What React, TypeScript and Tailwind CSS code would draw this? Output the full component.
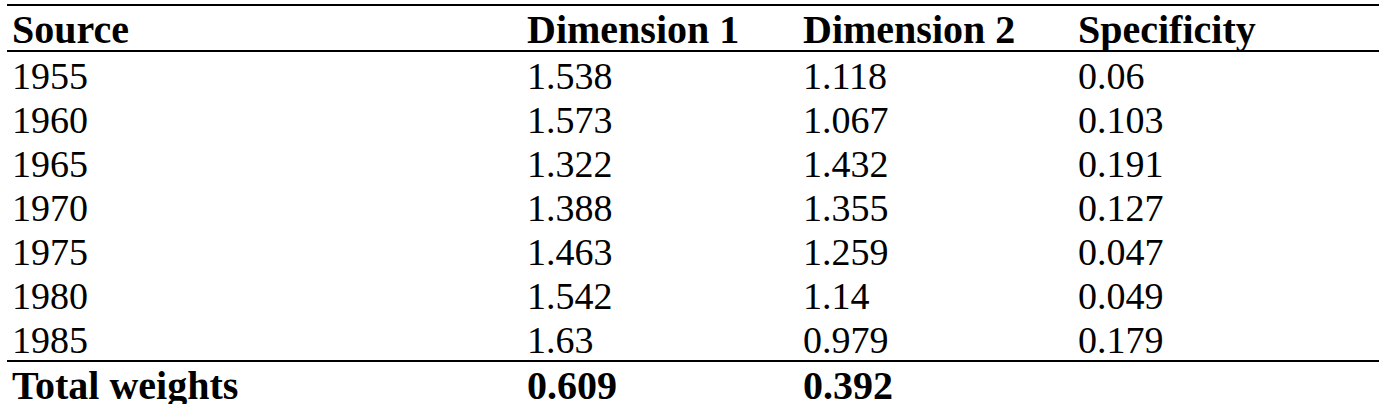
import React from "react";

const rows: [string, string, string, string][] = [
  ["1955", "1.538", "1.118", "0.06"],
  ["1960", "1.573", "1.067", "0.103"],
  ["1965", "1.322", "1.432", "0.191"],
  ["1970", "1.388", "1.355", "0.127"],
  ["1975", "1.463", "1.259", "0.047"],
  ["1980", "1.542", "1.14", "0.049"],
  ["1985", "1.63", "0.979", "0.179"],
];

const cols = "grid grid-cols-[515px_276px_275px_306px]";

export default function App() {
  return (
    <div className="bg-white w-[1392px] h-[404px] overflow-hidden pt-[4px] pl-[7px] text-black text-[38px] leading-[44px] [font-family:'Liberation_Serif',serif]">
      <div className="w-[1372px] border-t-2 border-black">
        <div className={`${cols} font-bold text-[40px] border-b-2 border-black h-[46px]`}>
          <div className="pl-[5px] pt-[2px]">Source</div>
          <div className="pl-[5px] pt-[2px]">Dimension 1</div>
          <div className="pl-[5px] pt-[2px]">Dimension 2</div>
          <div className="pl-[5px] pt-[2px]">Specificity</div>
        </div>
        {rows.map((r, i) => (
          <div
            key={r[0]}
            className={`${cols} ${i === rows.length - 1 ? "border-b-2 border-black h-[46px]" : "h-[44px]"}`}
          >
            {r.map((c, j) => (
              <div key={j} className="pl-[5px] pt-[2px]">{c}</div>
            ))}
          </div>
        ))}
        <div className={`${cols} font-bold text-[40px] h-[44px]`}>
          <div className="pl-[5px] pt-[2px]">Total weights</div>
          <div className="pl-[5px] pt-[2px]">0.609</div>
          <div className="pl-[5px] pt-[2px]">0.392</div>
          <div className="pl-[5px] pt-[2px]"></div>
        </div>
      </div>
    </div>
  );
}
